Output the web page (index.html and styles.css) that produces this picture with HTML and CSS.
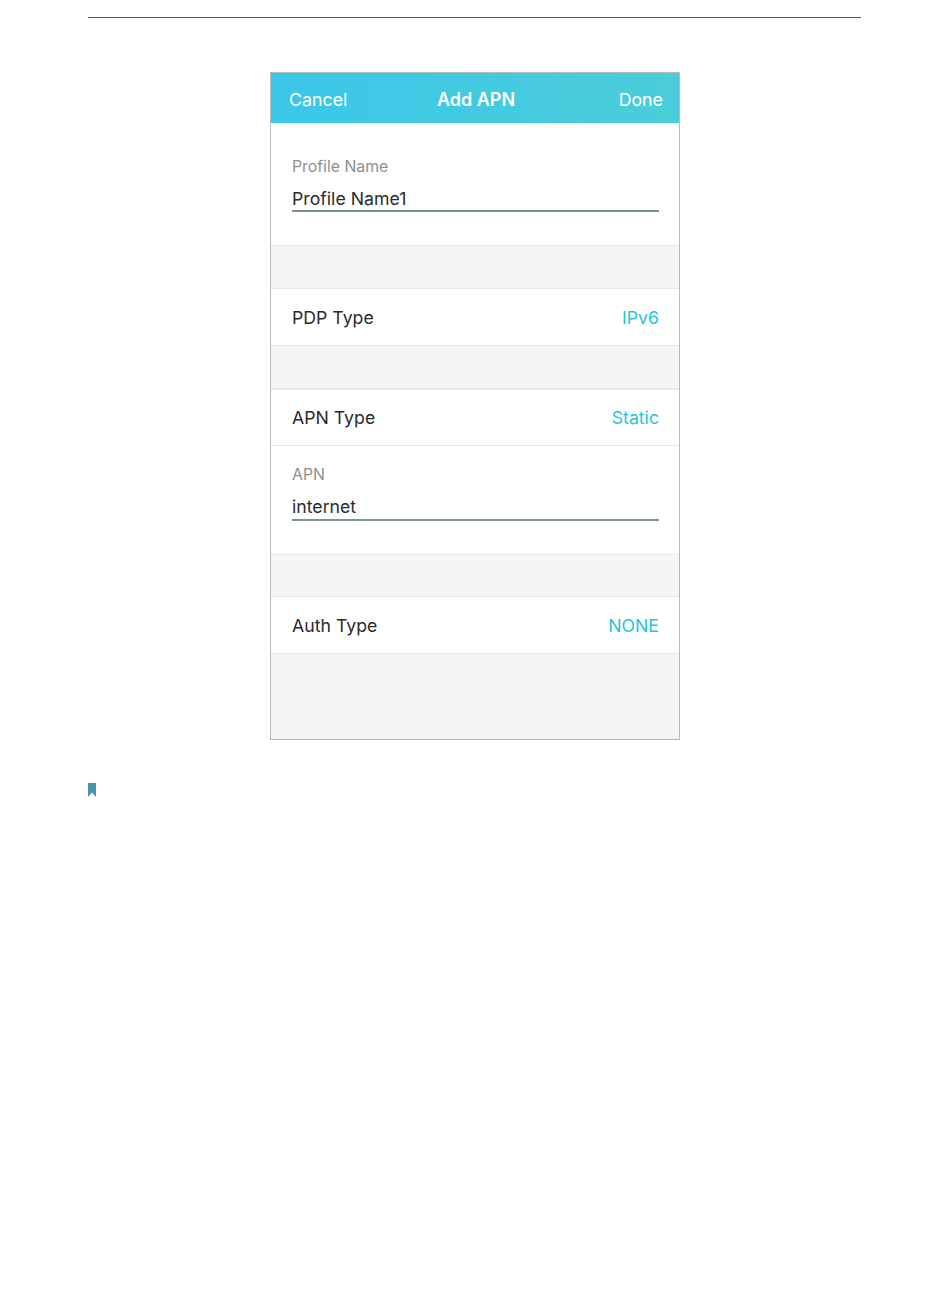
FILE: index.html
```html
<!DOCTYPE html>
<html lang="en">
<head>
    <meta charset="UTF-8">
    <meta name="viewport" content="width=device-width, initial-scale=1.0">
    <title>Add APN</title>
    <link rel="stylesheet" href="styles.css">
</head>
<body>
    <div class="page">
        <hr class="top-rule">
        <div class="phone">
            <div class="nav-bar">
                <span class="nav-link">Cancel</span>
                <span class="nav-title">Add APN</span>
                <span class="nav-link nav-done">Done</span>
            </div>
            <div class="field field-profile">
                <div class="field-label">Profile Name</div>
                <div class="field-value">Profile Name1</div>
            </div>
            <div class="gap"></div>
            <div class="row">
                <span>PDP Type</span>
                <span class="row-value">IPv6</span>
            </div>
            <div class="gap gap-heavy"></div>
            <div class="row row-apn">
                <span>APN Type</span>
                <span class="row-value">Static</span>
            </div>
            <div class="field field-apn">
                <div class="field-label">APN</div>
                <div class="field-value">internet</div>
            </div>
            <div class="gap gap-short"></div>
            <div class="row">
                <span>Auth Type</span>
                <span class="row-value">NONE</span>
            </div>
            <div class="bottom-space"></div>
        </div>
        <svg class="note-icon" width="8" height="14" viewBox="0 0 8 14">
            <path d="M0 0H8V14L4 9.5L0 14Z" fill="#4a93ab"/>
        </svg>
    </div>
</body>
</html>
```

FILE: styles.css
```css
body {
    font-family: Inter, "Liberation Sans", Arial, sans-serif;
    margin: 0;
    background-color: #fff;
}

.page {
    padding: 17px 89px 0 88px;
}

.top-rule {
    height: 1px;
    margin: 0 0 54px;
    border: none;
    background-color: #5a5a5a;
}

/* Phone screen */
.phone {
    width: 408px;
    margin-left: 182px;
    border: 1px solid #b9b9b9;
    background-color: #f5f5f5;
}

.nav-bar {
    height: 47px;
    padding: 3px 16px 0 18px;
    display: grid;
    grid-template-columns: 1fr auto 1fr;
    align-items: center;
    color: white;
    font-size: 17.8px;
    background: linear-gradient(90deg, #3bc7ea, #4bcdd9);
}

.nav-title {
    font-size: 18px;
    font-weight: 600;
}

.nav-done {
    text-align: right;
}

/* Stacked label + value */
.field {
    box-sizing: border-box;
    border-bottom: 1px solid #e8e8e8;
    padding: 0 20px 0 21px;
    background-color: white;
}

.field-profile {
    height: 123px;
    padding-top: 34px;
}

.field-apn {
    height: 109px;
    padding-top: 19px;
}

.field-label {
    color: #8f8f8f;
    font-size: 15.8px;
    line-height: 20px;
}

.field-value {
    height: 30px;
    border-bottom: 2px solid #7d9393;
    color: #2b2b2b;
    font-size: 17.7px;
}

.field-profile .field-value {
    margin-top: 3px;
    line-height: 38px;
}

.field-apn .field-value {
    margin-top: 4px;
    line-height: 35px;
}

.gap {
    height: 42px;
}

.gap-heavy {
    border-bottom: 2px solid #e8e8e8;
}

.gap-short {
    height: 41px;
}

/* Label on the left, value on the right */
.row {
    height: 56px;
    padding: 0 20px 0 21px;
    display: flex;
    align-items: center;
    justify-content: space-between;
    border-top: 1px solid #e8e8e8;
    border-bottom: 1px solid #e8e8e8;
    color: #2b2b2b;
    font-size: 17.7px;
    background-color: white;
}

.row-apn {
    height: 55px;
    border-top: none;
}

.row-value {
    color: #1fc6d8;
}

.bottom-space {
    height: 85px;
}

.note-icon {
    display: block;
    margin-top: 43px;
}
```
